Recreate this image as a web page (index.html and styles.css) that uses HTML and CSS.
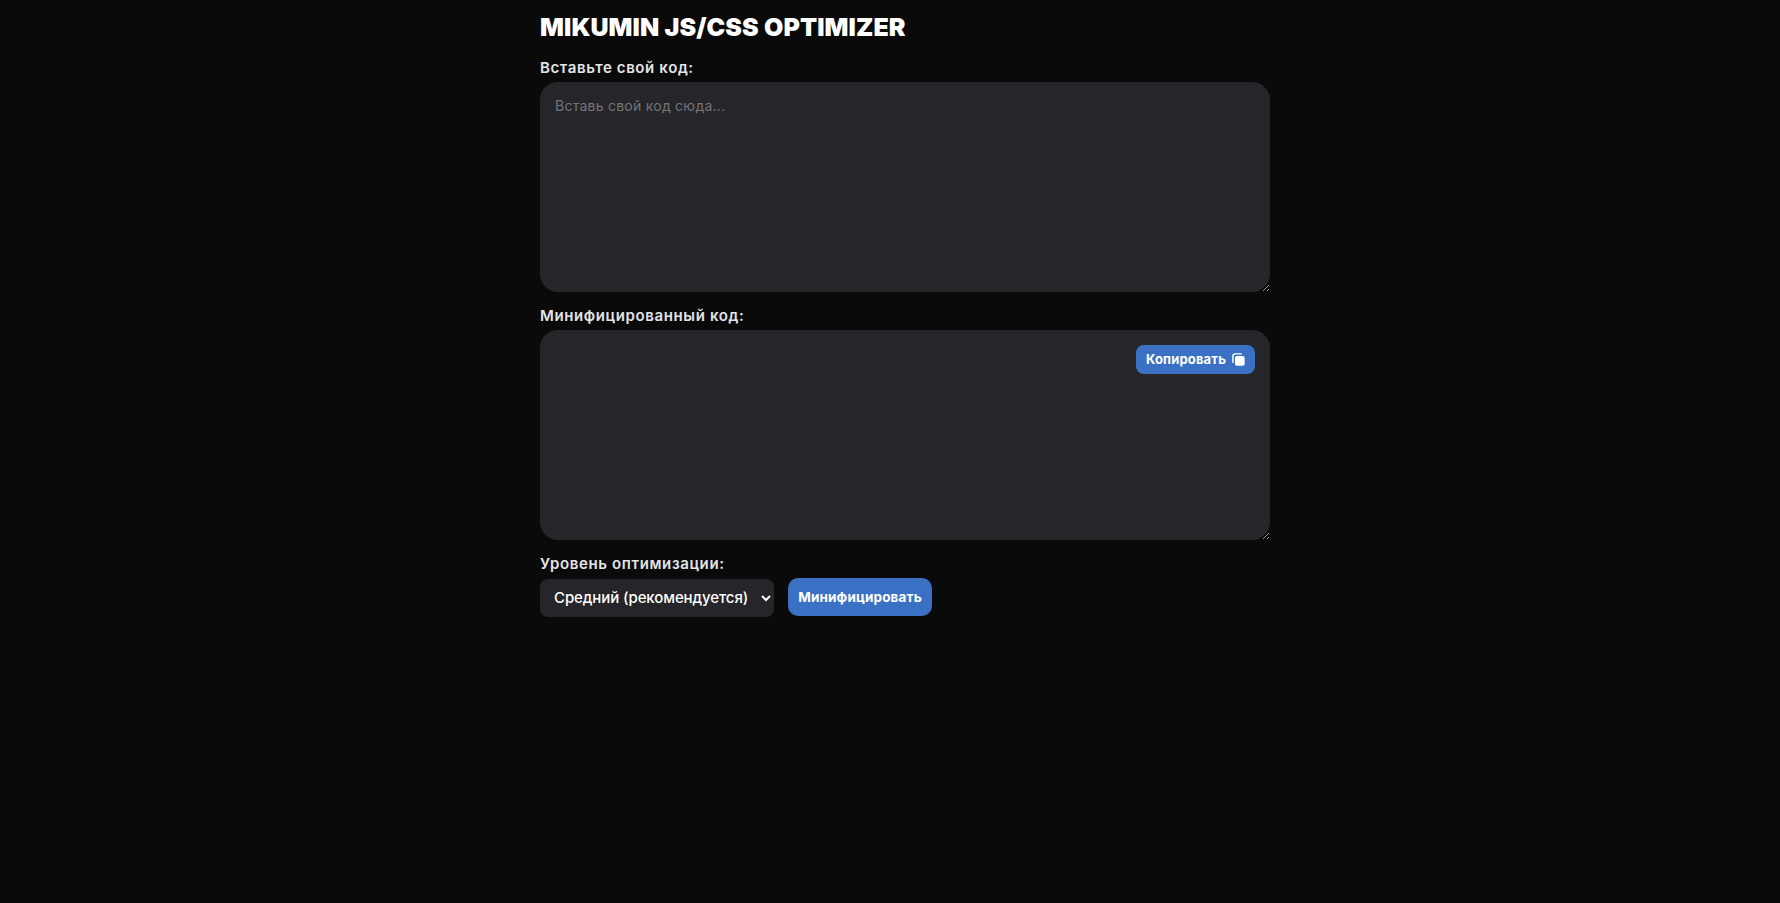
FILE: index.html
```html
<!DOCTYPE html>
<html lang="ru">
<head>
<meta charset="utf-8">
<title>Mikumin JS/CSS Optimizer</title>
<link rel="stylesheet" href="styles.css">
</head>
<body>
<main class="container">
  <h1 class="title">MIKUMIN JS/CSS OPTIMIZER</h1>
  <label class="label" for="input">Вставьте свой код:</label>
  <textarea id="input" class="code" placeholder="Вставь свой код сюда..."></textarea>
  <label class="label" for="output">Минифицированный код:</label>
  <div class="output-wrap">
    <textarea id="output" class="code" readonly></textarea>
    <button class="btn copy" type="button">Копировать
      <svg class="copy-icon" viewBox="0 0 12 12" width="13" height="13" aria-hidden="true">
        <path d="M.8 8.6V3A2.2 2.2 0 0 1 3 .8h5.6" fill="none" stroke="#fff" stroke-width="1.3" stroke-linecap="round"/>
        <rect x="2.7" y="2.7" width="9" height="9" rx="1.8" fill="#fff"/>
      </svg>
    </button>
  </div>
  <label class="label" for="level">Уровень оптимизации:</label>
  <div class="controls">
    <select id="level" class="level">
      <option>Средний (рекомендуется)</option>
    </select>
    <button class="btn run" type="button">Минифицировать</button>
  </div>
</main>
</body>
</html>
```

FILE: styles.css
```css
* { box-sizing: border-box; }
html, body { height: 100%; }
body {
  margin: 0;
  background: #0a0a0b;
  color: #fff;
  font-family: "Inter", "Noto Sans", sans-serif;
}
.container {
  width: 760px;
  margin: 0 auto;
  padding: 12px 0 0 30px;
}
.title {
  margin: 0 0 16px;
  font-size: 25px;
  line-height: 30px;
  font-weight: 900;
  letter-spacing: 0.1px;
  color: #fff;
}
.label {
  display: block;
  font-size: 15px;
  line-height: 20px;
  font-weight: 600;
  letter-spacing: 0.62px;
  color: #e4e4e7;
  margin-bottom: 4px;
}
.code {
  display: block;
  width: 730px;
  height: 210px;
  padding: 14px 15px;
  border: 0;
  outline: 0;
  border-radius: 18px;
  background: #25252a;
  color: #fff;
  font-family: "Inter", sans-serif;
  font-size: 14px;
  line-height: 20px;
  letter-spacing: 0.25px;
  margin-bottom: 14px;
  resize: vertical;
}
.code::placeholder { color: #747479; opacity: 1; }
.output-wrap { position: relative; }
.btn {
  border: 0;
  background: #3b71c4;
  color: #fff;
  font-family: "Inter", sans-serif;
  font-weight: 700;
  letter-spacing: 0.15px;
}
.copy {
  position: absolute;
  top: 15px;
  right: 15px;
  height: 29px;
  width: 119px;
  border-radius: 8px;
  font-size: 13px;
  display: flex;
  align-items: center;
  gap: 6px;
  padding: 0 0 1px 10px;
}
.copy-icon { flex: none; }
.controls {
  display: flex;
  align-items: flex-start;
  gap: 14px;
}
.level {
  width: 234px;
  height: 38px;
  margin-top: 1px;
  padding: 0 0 2px 10px;
  border: 0;
  border-radius: 8px;
  background: #25252a;
  color: #fff;
  font-family: "Inter", sans-serif;
  font-size: 15px;
  font-weight: 500;
  letter-spacing: -0.1px;
}
.run {
  width: 144px;
  height: 38px;
  border-radius: 10px;
  font-size: 13.5px;
  padding: 0;
}
```
